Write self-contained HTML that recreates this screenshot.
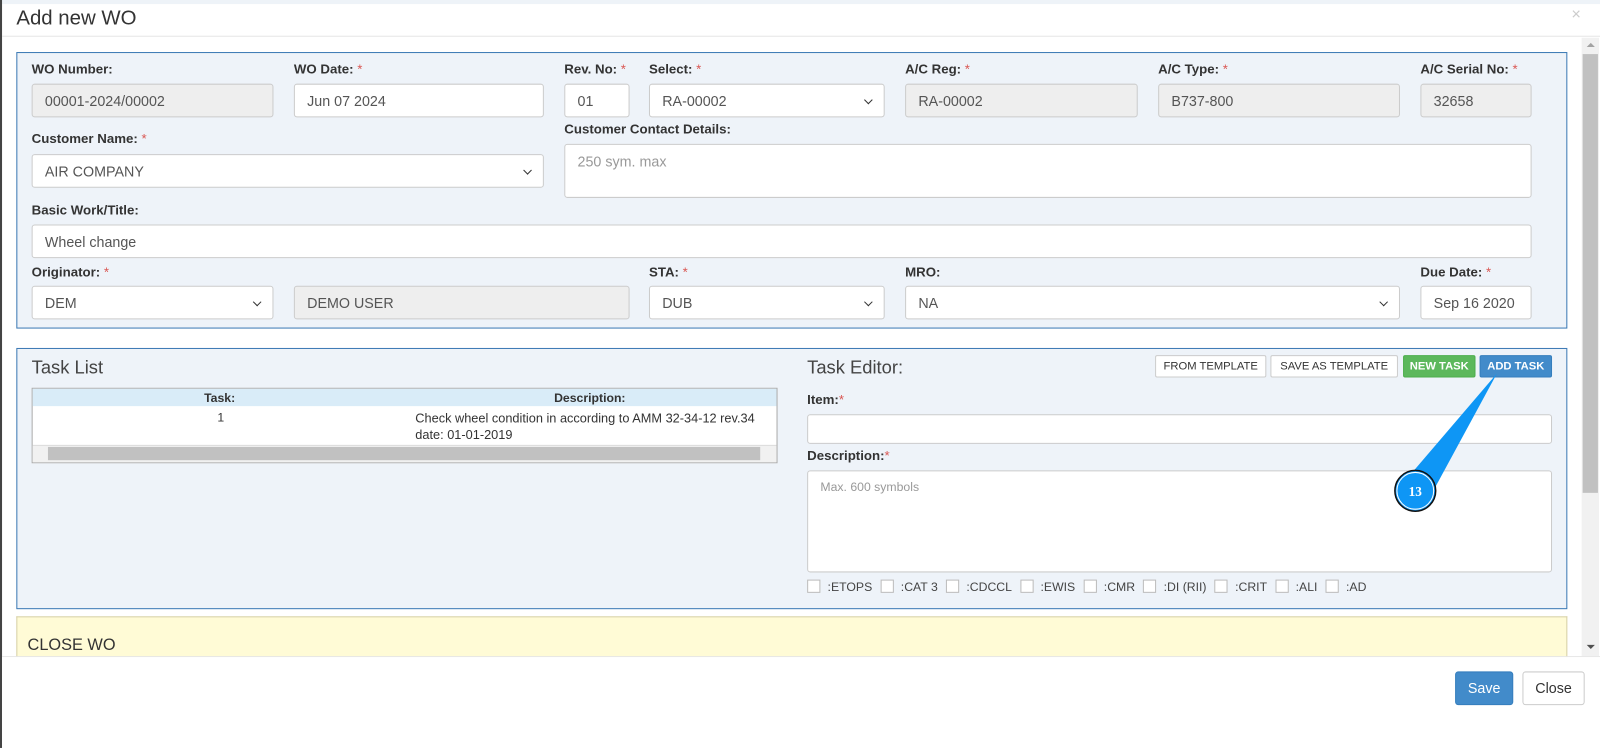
<!DOCTYPE html>
<html><head><style>
*{box-sizing:border-box;margin:0;padding:0}
body{width:1600px;height:733px;overflow:hidden;background:#fff;font-family:"Liberation Sans",Arial,sans-serif;color:#333;position:relative}
#w{position:absolute;left:0;top:0;width:1568px;height:719px;transform:scale(1.0204);transform-origin:0 0}
.a{position:absolute}
.lbl{position:absolute;font-size:13px;font-weight:bold;color:#333}
.lbl i{color:#d9534f;font-style:normal;font-weight:normal}
.in{position:absolute;height:33px;border:1px solid #ccc;border-radius:3px;background:#fff;font-size:14px;color:#555;padding:8px 12px 0 12px;white-space:nowrap}
.g{background:#eee}
.sel::after{content:"";position:absolute;right:12px;top:12px;width:5px;height:5px;border-right:1.5px solid #333;border-bottom:1.5px solid #333;transform:rotate(45deg)}
.btn{position:absolute;top:348px;height:22px;font-size:11px;border:1px solid #ccc;border-radius:2px;background:#fff;color:#333;text-align:center;line-height:20px}
.cb{display:inline-block;width:13px;height:13px;border:1px solid #bbb;background:#fff;vertical-align:-2px;margin-right:7px}
.cbs{font-size:12px;color:#444;white-space:nowrap}
.cbs b{font-weight:normal;margin-right:8px}
</style></head><body>
<div id="w">
<div class="a" style="left:0;top:0;width:1568px;height:4px;background:#eef3f8"></div>
<div class="a" style="left:0;top:0;width:2px;height:733px;background:#444"></div>
<div class="a" style="left:16px;top:7px;font-size:20px;color:#333">Add new WO</div>
<div class="a" style="left:1540px;top:6px;font-size:16px;color:#ccc">×</div>
<div class="a" style="left:2px;top:35px;width:1566px;height:1px;background:#e5e5e5"></div>
<div class="a" style="left:1550px;top:37px;width:17px;height:606px;background:#f1f1f1"></div>
<div class="a" style="left:1551px;top:53px;width:15px;height:430px;background:#c1c1c1"></div>
<div class="a" style="left:1555px;top:42px;width:0;height:0;border:4px solid transparent;border-bottom-color:#a3a3a3;border-top:0"></div>
<div class="a" style="left:1555px;top:632px;width:0;height:0;border:4px solid transparent;border-top-color:#505050;border-bottom:0"></div>

<div class="a" style="left:16px;top:51px;width:1520px;height:271px;background:#eef3f9;border:1px solid #3c7ab5"></div>
<div class="lbl" style="left:31px;top:60px">WO Number:</div>
<div class="lbl" style="left:288px;top:60px">WO Date: <i>*</i></div>
<div class="lbl" style="left:553px;top:60px">Rev. No: <i>*</i></div>
<div class="lbl" style="left:636px;top:60px">Select: <i>*</i></div>
<div class="lbl" style="left:887px;top:60px">A/C Reg: <i>*</i></div>
<div class="lbl" style="left:1135px;top:60px">A/C Type: <i>*</i></div>
<div class="lbl" style="left:1392px;top:60px">A/C Serial No: <i>*</i></div>
<div class="in g" style="left:31px;top:82px;width:237px">00001-2024/00002</div>
<div class="in" style="left:288px;top:82px;width:245px">Jun 07 2024</div>
<div class="in" style="left:553px;top:82px;width:64px">01</div>
<div class="in sel" style="left:636px;top:82px;width:231px">RA-00002</div>
<div class="in g" style="left:887px;top:82px;width:228px">RA-00002</div>
<div class="in g" style="left:1135px;top:82px;width:237px">B737-800</div>
<div class="in g" style="left:1392px;top:82px;width:109px">32658</div>
<div class="lbl" style="left:31px;top:128px">Customer Name: <i>*</i></div>
<div class="lbl" style="left:553px;top:119px">Customer Contact Details:</div>
<div class="in sel" style="left:31px;top:151px;width:502px">AIR COMPANY</div>
<div class="in" style="left:553px;top:141px;width:948px;height:53px;color:#999">250 sym. max</div>
<div class="lbl" style="left:31px;top:198px">Basic Work/Title:</div>
<div class="in" style="left:31px;top:220px;width:1470px">Wheel change</div>
<div class="lbl" style="left:31px;top:259px">Originator: <i>*</i></div>
<div class="lbl" style="left:636px;top:259px">STA: <i>*</i></div>
<div class="lbl" style="left:887px;top:259px">MRO:</div>
<div class="lbl" style="left:1392px;top:259px">Due Date: <i>*</i></div>
<div class="in sel" style="left:31px;top:280px;width:237px">DEM</div>
<div class="in g" style="left:288px;top:280px;width:329px">DEMO USER</div>
<div class="in sel" style="left:636px;top:280px;width:231px">DUB</div>
<div class="in sel" style="left:887px;top:280px;width:485px">NA</div>
<div class="in" style="left:1392px;top:280px;width:109px">Sep 16 2020</div>

<div class="a" style="left:16px;top:341px;width:1520px;height:256px;background:#eef3f9;border:1px solid #3c7ab5"></div>
<div class="a" style="left:31px;top:350px;font-size:18px;color:#444">Task List</div>
<div class="a" style="left:31px;top:380px;width:731px;height:74px;border:1px solid #aaa;background:#fff">
 <div class="a" style="left:0;top:0;width:729px;height:17px;background:#d9ecf8;font-size:12px;font-weight:bold">
  <span class="a" style="left:168px;top:2px">Task:</span><span class="a" style="left:511px;top:2px">Description:</span></div>
 <div class="a" style="left:181px;top:21px;font-size:12px">1</div>
 <div class="a" style="left:375px;top:21px;font-size:12.5px;line-height:16px;width:360px">Check wheel condition in according to AMM 32-34-12 rev.34<br>date: 01-01-2019</div>
 <div class="a" style="left:0;top:55px;width:729px;height:17px;background:#f1f1f1;border-top:1px solid #ddd"></div>
 <div class="a" style="left:15px;top:57px;width:698px;height:13px;background:#c1c1c1"></div>
</div>
<div class="a" style="left:791px;top:350px;font-size:18px;color:#444">Task Editor:</div>
<div class="btn" style="left:1132px;width:109px">FROM TEMPLATE</div>
<div class="btn" style="left:1245px;width:125px">SAVE AS TEMPLATE</div>
<div class="btn" style="left:1375px;width:71px;background:#5cb85c;border-color:#4cae4c;color:#fff;font-weight:bold">NEW TASK</div>
<div class="btn" style="left:1450px;width:71px;background:#428bca;border-color:#357ebd;color:#fff;font-weight:bold">ADD TASK</div>
<div class="lbl" style="left:791px;top:384px">Item:<i>*</i></div>
<div class="in" style="left:791px;top:406px;width:730px;height:29px"></div>
<div class="lbl" style="left:791px;top:439px">Description:<i>*</i></div>
<div class="in" style="left:791px;top:461px;width:730px;height:100px;font-size:12px;color:#999;padding-top:8px">Max. 600 symbols</div>
<div class="a cbs" style="left:791px;top:568px"><span class="cb"></span><b>:ETOPS</b><span class="cb"></span><b>:CAT 3</b><span class="cb"></span><b>:CDCCL</b><span class="cb"></span><b>:EWIS</b><span class="cb"></span><b>:CMR</b><span class="cb"></span><b>:DI (RII)</b><span class="cb"></span><b>:CRIT</b><span class="cb"></span><b>:ALI</b><span class="cb"></span><b>:AD</b></div>
<svg class="a" style="left:0;top:0" width="1568" height="719">
<polygon points="1467,366 1378,470 1403,484" fill="#0e96f5"/>
<circle cx="1387" cy="481" r="20" fill="#0e96f5" stroke="#111" stroke-width="1.5"/>
<circle cx="1387" cy="481" r="18" fill="none" stroke="#fff" stroke-width="1"/>
<text x="1387" y="486" font-family="Liberation Serif,serif" font-weight="bold" font-size="13" fill="#fff" text-anchor="middle">13</text>
</svg>

<div class="a" style="left:16px;top:604px;width:1520px;height:40px;background:#fffbd6;border:1px solid #d6d0a8;border-bottom:none"></div>
<div class="a" style="left:27px;top:624px;font-size:16px;color:#333">CLOSE WO</div>
<div class="a" style="left:2px;top:643px;width:1566px;height:1px;background:#e5e5e5"></div>
<div class="a" style="left:2px;top:644px;width:1566px;height:89px;background:#fff"></div>
<div class="a" style="left:1426px;top:658px;width:57px;height:33px;background:#428bca;border:1px solid #357ebd;border-radius:3px;color:#fff;font-size:14px;text-align:center;line-height:31px">Save</div>
<div class="a" style="left:1492px;top:658px;width:61px;height:33px;background:#fff;border:1px solid #ccc;border-radius:3px;color:#333;font-size:14px;text-align:center;line-height:31px">Close</div>
</div>
</body></html>
